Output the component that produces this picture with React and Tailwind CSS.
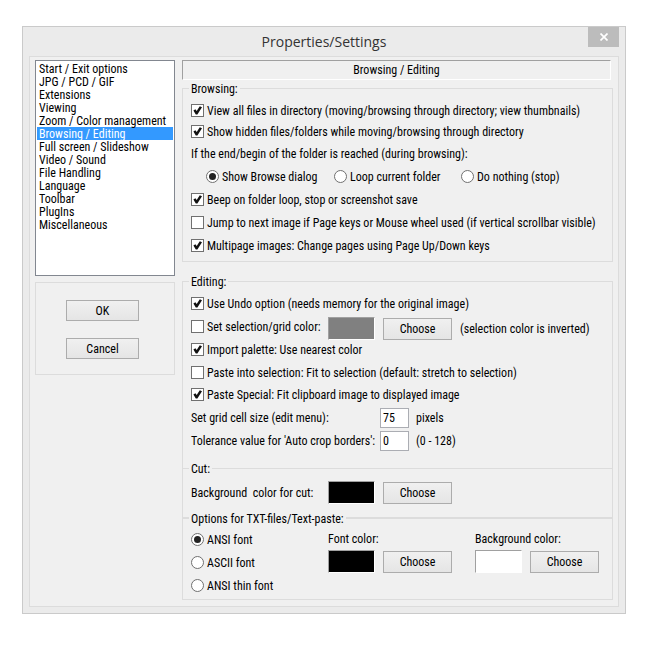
import React, { useState } from "react";

const pages = [
  "Start / Exit options",
  "JPG / PCD / GIF",
  "Extensions",
  "Viewing",
  "Zoom / Color management",
  "Browsing / Editing",
  "Full screen / Slideshow",
  "Video / Sound",
  "File Handling",
  "Language",
  "Toolbar",
  "PlugIns",
  "Miscellaneous",
];

const Check = ({ label, checked, className = "h-[23px]" }) => (
  <label className={`flex items-center gap-[3px] ${className}`}>
    <span className="grid shrink-0">
      <input
        type="checkbox"
        defaultChecked={checked}
        className="peer col-start-1 row-start-1 h-[13px] w-[13px] appearance-none border border-[#707070] bg-white"
      />
      <svg
        viewBox="0 0 13 13"
        className="pointer-events-none invisible col-start-1 row-start-1 h-[13px] w-[13px] peer-checked:visible"
      >
        <path d="M2.4 6.4 L4.4 5.2 L5.7 7 L8.8 2.2 L11 3.2 L6.4 10.4 L4.8 10.4 Z" fill="#111" />
      </svg>
    </span>
    <span className="pt-0.5">{label}</span>
  </label>
);

const Radio = ({ name, label, checked, className = "" }) => (
  <label className={`flex h-[23px] items-center gap-[3px] ${className}`}>
    <span className="grid shrink-0">
      <input
        type="radio"
        name={name}
        defaultChecked={checked}
        className="peer col-start-1 row-start-1 h-[13px] w-[13px] appearance-none rounded-full border border-[#707070] bg-white"
      />
      <span className="pointer-events-none invisible col-start-1 row-start-1 m-[3px] h-[7px] w-[7px] rounded-full bg-[#222] peer-checked:visible" />
    </span>
    <span className="pt-0.5">{label}</span>
  </label>
);

const Button = ({ children, className }) => (
  <button
    type="button"
    className={`border border-[#acacac] bg-linear-to-b from-[#f0f0f0] to-[#e5e5e5] pt-0.5 ${className}`}
  >
    {children}
  </button>
);

// Sunken color preview with its button
const ColorPicker = ({ color }) => (
  <div className="flex items-center gap-2">
    <span
      className={`h-[23px] w-[47px] border border-t-[#a0a0a0] border-r-white border-b-white border-l-[#a0a0a0] ${color}`}
    />
    <Button className="h-[22px] w-[69px]">Choose</Button>
  </div>
);

const Group = ({ title, children, className }) => (
  <fieldset className={`min-w-0 border-[#dcdcdc] px-[6px] ${className}`}>
    <legend className="h-[13px] bg-[#f0f0f0] px-[2px] leading-[15px]">{title}</legend>
    <div className="px-[2px]">{children}</div>
  </fieldset>
);

const NumberRow = ({ id, label, value, hint }) => (
  <div className="flex h-[23px] items-center">
    <label htmlFor={id} className="w-[189px] pt-0.5">
      {label}
    </label>
    <input
      id={id}
      type="text"
      defaultValue={value}
      className="h-5 w-[29px] border border-[#abadb3] bg-white px-0.5"
    />
    <span className="ml-[7px] pt-0.5">{hint}</span>
  </div>
);

const App = () => {
  const [page, setPage] = useState("Browsing / Editing");

  return (
    <div className="min-h-screen bg-white pt-[26px] pr-[25px] pb-12 pl-[22px] font-['Roboto_Condensed','Liberation_Sans',sans-serif] text-[12px] leading-[13px] whitespace-nowrap text-black">
      <div className="border border-[#cacaca] bg-[#ebebeb]">
        <div className="flex h-[29px] items-start px-[6px]">
          <span className="w-[31px]" />
          <h1 className="flex-1 pt-1 text-center font-['Open_Sans',sans-serif] text-[14px] leading-[22px] text-[#333]">
            Properties/Settings
          </h1>
          <button
            type="button"
            aria-label="Close"
            className="flex h-5 w-[31px] items-center justify-center bg-[#bcbcbc]"
          >
            <svg viewBox="0 0 8 8" className="h-2 w-2">
              <path d="M0.5 0.5 L7.5 7.5 M7.5 0.5 L0.5 7.5" stroke="#fff" strokeWidth="1.7" />
            </svg>
          </button>
        </div>

        <div className="mx-[6px] mb-[6px] flex gap-[7px] border border-[#dcdcdc] bg-[#f0f0f0] pt-[3px] pr-[5px] pb-[6px] pl-[5px]">
          <div className="w-[140px] shrink-0">
            <ul className="h-[216px] border border-[#828790] bg-white p-[1px]">
              {pages.map((p) => (
                <li key={p}>
                  <button
                    type="button"
                    onClick={() => setPage(p)}
                    className={`block h-[13px] w-full px-0.5 pt-px text-left ${
                      p === page ? "bg-[#3399ff] text-white" : ""
                    }`}
                  >
                    {p}
                  </button>
                </li>
              ))}
            </ul>
            <div className="mt-[6px] flex flex-col items-center gap-[17px] border border-[#dcdcdc] pt-[17px] pr-[5px] pb-[15px]">
              <Button className="h-[21px] w-[73px]">OK</Button>
              <Button className="h-[21px] w-[73px]">Cancel</Button>
            </div>
          </div>

          <div className="min-w-0 flex-1">
            <h2 className="mr-0.5 flex h-5 items-center justify-center border border-t-[#a0a0a0] border-r-white border-b-white border-l-[#a0a0a0]">
              {page}
            </h2>

            <Group title="Browsing:" className="mt-[2px] border pt-[5px] pb-[4px]">
              <Check
                checked
                className="h-[21px]"
                label="View all files in directory (moving/browsing through directory; view thumbnails)"
              />
              <Check
                checked
                className="h-[21px]"
                label="Show hidden files/folders while moving/browsing through directory"
              />
              <div className="flex h-[23px] items-center pt-0.5">
                If the end/begin of the folder is reached (during browsing):
              </div>
              <div className="flex pl-[15px]">
                <Radio name="end" checked label="Show Browse dialog" className="w-[128px]" />
                <Radio name="end" label="Loop current folder" className="w-[127px]" />
                <Radio name="end" label="Do nothing (stop)" />
              </div>
              <Check checked label="Beep on folder loop, stop or screenshot save" />
              <Check label="Jump to next image if Page keys or Mouse wheel used (if vertical scrollbar visible)" />
              <Check checked label="Multipage images: Change pages using Page Up/Down keys" />
            </Group>

            <Group title="Editing:" className="mt-[13px] border border-b-0 pt-[4px] pb-[16px]">
              <Check checked label="Use Undo option (needs memory for the original image)" />
              <div className="flex h-[23px] items-center">
                <Check label="Set selection/grid color:" className="w-[137px]" />
                <div className="flex items-center gap-2 pt-1">
                  <ColorPicker color="bg-[#808080]" />
                  <span className="pt-0.5">(selection color is inverted)</span>
                </div>
              </div>
              <Check checked label="Import palette: Use nearest color" />
              <Check
                label="Paste into selection: Fit to selection (default: stretch to selection)"
                className="h-[22px]"
              />
              <Check checked label="Paste Special: Fit clipboard image to displayed image" />
              <NumberRow id="grid" label="Set grid cell size (edit menu):" value="75" hint="pixels" />
              <NumberRow
                id="tolerance"
                label="Tolerance value for 'Auto crop borders':"
                value="0"
                hint="(0 - 128)"
              />
            </Group>

            <Group title="Cut:" className="-mt-[6px] border pt-[6px] pb-[13px]">
              <div className="flex h-[23px] items-center">
                <span className="w-[137px] pt-0.5 whitespace-pre">Background  color for cut:</span>
                <ColorPicker color="bg-black" />
              </div>
            </Group>

            <Group
              title="Options for TXT-files/Text-paste:"
              className="-mt-[6px] border pt-[3px] pb-[2px]"
            >
              <div className="flex">
                <div className="w-[137px]">
                  <Radio name="font" checked label="ANSI font" />
                  <Radio name="font" label="ASCII font" />
                  <Radio name="font" label="ANSI thin font" />
                </div>
                <div className="w-[147px]">
                  <div className="flex h-[22px] items-center">Font color:</div>
                  <ColorPicker color="bg-black" />
                </div>
                <div>
                  <div className="flex h-[22px] items-center">Background color:</div>
                  <ColorPicker color="bg-white" />
                </div>
              </div>
            </Group>
          </div>
        </div>
      </div>
    </div>
  );
};

export default App;
